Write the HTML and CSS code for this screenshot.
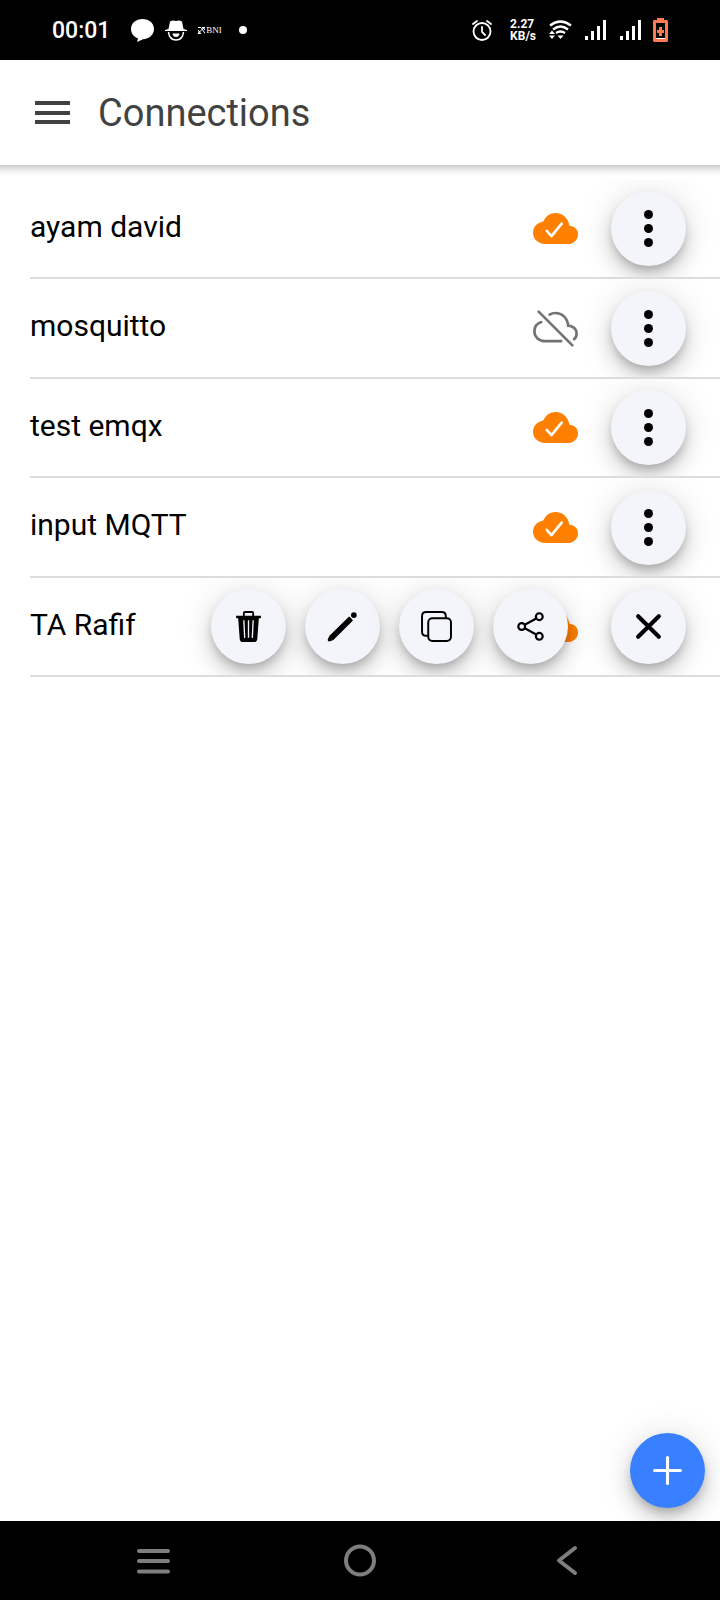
FILE: index.html
```html
<!DOCTYPE html>
<html lang="en">
<head>
<meta charset="utf-8">
<meta name="viewport" content="width=device-width, initial-scale=1">
<title>Connections</title>
<link rel="stylesheet" href="styles.css">
</head>
<body>
<svg class="defs" aria-hidden="true">
  <symbol id="cloud-done" viewBox="0 0 512 512">
    <path fill="#ff8000" d="M396 432H136c-36.400 0-70.400-12.600-95.500-35.400C14.400 372.900 0 340 0 304c0-36.600 13.400-68.100 38.700-91.200 18.100-16.500 42.200-28.300 69.200-33.900a16 16 0 0 0 11.400-9.200 156 156 0 0 1 42-57C187.800 91.700 220.500 80 256 80a153.600 153.600 0 0 1 107.100 42.900c24.700 23.800 41.500 55.300 49.200 92a16 16 0 0 0 12.900 12.400c23.500 4 44.300 13.400 60.400 27.300C505.200 271.300 512 294.400 512 328c0 28.300-12.700 55.100-35.700 74.500C454.600 420.900 426.100 432 396 432z"/>
    <path fill="none" stroke="#fff" stroke-width="30" stroke-linecap="round" stroke-linejoin="round" d="M156 284l54 58 116-142"/>
  </symbol>
  <symbol id="cloud-off" viewBox="0 0 512 512">
    <g fill="none" stroke="#737373" stroke-width="30" stroke-linecap="round">
      <path d="M93.700 183.200C49.500 198 16 233.100 16 288c0 66 54 112 120 112h184.400"/>
      <path d="M467.800 377.200C485.200 363.300 496 341.600 496 312c0-59.800-53-85.800-96-88-8.900-89.500-71-144-144-144-26.200 0-48.800 6.900-67.600 18.100"/>
      <path d="M448 448L64 64"/>
    </g>
  </symbol>
  <symbol id="dots" viewBox="0 0 39 39">
    <circle cx="19.500" cy="5.500" r="4.500"/><circle cx="19.500" cy="19.500" r="4.500"/><circle cx="19.500" cy="33.500" r="4.500"/>
  </symbol>
  <symbol id="signal" viewBox="0 0 22 20">
    <path fill="#fff" d="M0 16h3v4H0zM6 11h3v9H6zM12 6h3v14h-3zM18 0h3v20h-3z"/>
  </symbol>
</svg>
<div class="screen">
  <div class="status">
    <div class="status-left">
      <time class="clock">00:01</time>
      <svg width="23" height="23" viewBox="0 0 23 23"><path fill="#fff" d="M11.500 0C18 0 23 4.300 23 10s-5 10-11 10.300L6 23l1-3.500C3 18 0 14.500 0 10 0 4.300 5 0 11.500 0z"/></svg>
      <svg width="22" height="21" viewBox="0 0 22 21"><path fill="#fff" d="M5 1.500Q8 0 11 1q3-1 6 .5L18.500 9 22 10v1H0v-1l3.500-1z"/><path fill="none" stroke="#fff" stroke-width="1.500" d="M3.500 12C4 17 7 20 11 20s7-3 7.500-8"/><path fill="#fff" d="M7.500 13.500h7Q14 17 11 17t-3.500-3.500z"/></svg>
      <span class="bank"><svg width="7" height="7" viewBox="0 0 7 7"><path stroke="#fff" fill="none" d="M0 .5h3l4 6M0 6.500l6-6M0 3l3 4M4 0l3 3M5 .5h2v2M0 4v2.500h2"/></svg>BNI</span>
      <i class="dot"></i>
    </div>
    <div class="status-right">
      <svg width="20" height="21" viewBox="0 0 20 21"><g fill="none" stroke="#fff" stroke-width="1.800" stroke-linecap="round"><circle cx="10" cy="11.500" r="8.500"/><path d="M1 4l4-3M19 4l-4-3M10 7v5l3 3"/></g></svg>
      <div class="speed"><span>2.27</span><span>KB/s</span></div>
      <svg width="23" height="20" viewBox="0 0 23 20"><g fill="none" stroke="#fff" stroke-width="2.400"><path d="M1 5.500q10.500-8 21 0M4 9.500q7.500-6 15 0M7 13q4.500-3 9 0"/></g><path fill="#fff" d="M0 14l3-3.500L6 14zM0 15.500h6L3 19zM8.500 15.500h6l-3 3.500z"/></svg>
      <svg width="22" height="20"><use href="#signal"/></svg>
      <svg class="sim" width="22" height="20"><use href="#signal"/></svg>
      <svg width="15" height="24" viewBox="0 0 15 24"><path fill="#ff7a50" d="M4 0h7v2h3l1 1v20l-1 1H1l-1-1V3l1-1h3z"/><path d="M3 5h9v16H3z"/><path fill="#ff7a50" d="M6 9h3v3h2v3H9v3H6v-3H4v-3h2z"/><path fill="#fff" d="M3 20h9v1H3z"/></svg>
    </div>
  </div>

  <header class="bar">
    <button class="plain" aria-label="Menu"><svg width="35" height="24" viewBox="0 0 35 24"><path fill="#424242" d="M0 0h35v4H0zM0 10h35v4H0zM0 19h35v4H0z"/></svg></button>
    <h1>Connections</h1>
  </header>

  <main class="content">
    <ul class="list">
      <li class="row"><span class="name">ayam david</span><svg class="cloud" role="img" aria-label="Connected"><use href="#cloud-done"/></svg><button class="fab" aria-label="Options"><svg width="39" height="39"><use href="#dots"/></svg></button></li>
      <li class="row"><span class="name">mosquitto</span><svg class="cloud" role="img" aria-label="Offline"><use href="#cloud-off"/></svg><button class="fab" aria-label="Options"><svg width="39" height="39"><use href="#dots"/></svg></button></li>
      <li class="row"><span class="name">test emqx</span><svg class="cloud" role="img" aria-label="Connected"><use href="#cloud-done"/></svg><button class="fab" aria-label="Options"><svg width="39" height="39"><use href="#dots"/></svg></button></li>
      <li class="row"><span class="name">input MQTT</span><svg class="cloud" role="img" aria-label="Connected"><use href="#cloud-done"/></svg><button class="fab" aria-label="Options"><svg width="39" height="39"><use href="#dots"/></svg></button></li>
      <li class="row"><span class="name">TA Rafif</span><svg class="cloud" role="img" aria-label="Connected"><use href="#cloud-done"/></svg>
        <div class="actions">
          <button class="fab" aria-label="Delete"><svg width="31" height="31" viewBox="0 0 30 30"><path fill="none" stroke="#000" stroke-width="1.800" d="M10.500 5V2q0-1 1-1h7q1 0 1 1v3"/><path d="M3 4.500h24V7H3zM5 7h20l-1.500 20q-.3 3-3 3h-11q-2.700 0-3-3z"/><path stroke="#f4f5fa" stroke-width="1.300" d="M10.500 9l.8 17M15 9v17M19.500 9l-.8 17"/></svg></button>
          <button class="fab" aria-label="Edit"><svg width="31" height="31" viewBox="0 0 30 30"><path d="M21.500 6l3 3L6 27.500 2 29q-1-.3-.8-1.500L3 24z" stroke="#000" stroke-linejoin="round"/><circle cx="26" cy="4" r="2.700"/></svg></button>
          <button class="fab" aria-label="Duplicate"><svg width="31" height="31" viewBox="0 0 30 30"><g fill="none" stroke="#000" stroke-width="1.900"><rect x="7" y="7" width="22" height="22" rx="4"/><path d="M24 6.500V5q0-4-4-4H5Q1 1 1 5v15q0 4 4 4h1.500"/></g></svg></button>
          <button class="fab" aria-label="Share"><svg width="31" height="31" viewBox="0 0 30 30"><g fill="none" stroke="#000" stroke-width="2.100"><circle cx="6.500" cy="15" r="3.300"/><circle cx="23.500" cy="5.500" r="3.300"/><circle cx="23.500" cy="24.500" r="3.300"/><path d="M9.500 13.300l11-6M9.500 16.700l11 6"/></g></svg></button>
        </div>
        <button class="fab" aria-label="Close"><svg width="31" height="31" viewBox="0 0 30 30"><path stroke="#000" stroke-width="4" stroke-linecap="round" d="M5 5l20 20M25 5L5 25"/></svg></button></li>
    </ul>
    <button class="fab add" aria-label="Add connection"><svg width="31" height="31" viewBox="0 0 30 30"><path stroke="#fff" stroke-width="3" stroke-linecap="round" d="M15 2.500v25M2.500 15h25"/></svg></button>
  </main>

  <nav class="nav">
    <button class="plain" aria-label="Recent apps"><svg width="34" height="34" viewBox="0 0 34 34"><path stroke="#7e7e7e" stroke-width="4" stroke-linecap="round" d="M3 7h29M3 17h29M3 27.500h29"/></svg></button>
    <button class="plain" aria-label="Home"><svg width="34" height="34" viewBox="0 0 34 34"><circle cx="17" cy="16.500" r="14" fill="none" stroke="#7e7e7e" stroke-width="4"/></svg></button>
    <button class="plain" aria-label="Back"><svg width="34" height="34" viewBox="0 0 34 34"><path fill="none" stroke="#7e7e7e" stroke-width="4" stroke-linecap="round" stroke-linejoin="round" d="M25 4L9 16.500 25 29"/></svg></button>
  </nav>
</div>
</body>
</html>
```
FILE: styles.css
```css
* { box-sizing: border-box; }
body { margin: 0; background: #fff; color: #000; font-family: Roboto, sans-serif; }
svg { display: block; flex: none; }
button { border: 0; padding: 0; cursor: pointer; }
.defs { position: absolute; width: 0; height: 0; }
.screen { min-height: 100vh; display: flex; flex-direction: column; }

.status { height: 60px; padding: 0 52px; background: #000; color: #fff; display: flex; justify-content: space-between; align-items: center; }
.status-left, .status-right { display: flex; align-items: center; }
.status-left { gap: 11px; }
.clock { font-size: 23px; font-weight: 500; line-height: 28px; margin: 2px 10px 0 0; }
.bank { display: flex; align-items: center; gap: 1px; font: 9px/10px "Liberation Serif", serif; }
.dot { width: 8px; height: 8px; margin-left: 6px; border-radius: 50%; background: #fff; }
.status-right { gap: 13px; }
.speed { display: flex; flex-direction: column; font-size: 12px; line-height: 12px; font-weight: 700; margin-left: 5px; }
.sim { margin-right: -2px; }

.bar { position: relative; height: 105px; padding: 0 35px; display: flex; align-items: center; gap: 28px; background: #fff; }
.bar::after { content: ""; position: absolute; left: 0; right: 0; top: 100%; height: 10px; background: linear-gradient(rgba(0, 0, 0, .2), rgba(0, 0, 0, .08) 50%, transparent); }
.bar h1 { margin: 0; font-size: 38px; line-height: 44px; font-weight: 400; color: #424242; }
.plain { background: none; }

.content { position: relative; flex: 1; padding-top: 15px; }
.list { list-style: none; margin: 0; padding: 0; }
.row { position: relative; height: 99px; padding: 0 34px 2px 30px; display: flex; align-items: center; overflow: hidden; }
.row:nth-child(even) { height: 100px; }
.row::after { content: ""; position: absolute; left: 30px; right: 0; bottom: 0; height: 2px; background: #dcdcdc; }
.name { flex: 1; padding-bottom: 4px; font-size: 30px; line-height: 36px; }
.cloud { width: 45px; height: 45px; margin-right: 33px; }
.fab { flex: none; width: 75px; height: 75px; border-radius: 50%; background: #f4f5fa; display: flex; align-items: center; justify-content: center; box-shadow: 0 6px 10px -2px rgba(0, 0, 0, .2), 0 12px 20px rgba(0, 0, 0, .14), 0 2px 36px rgba(0, 0, 0, .12); }
.actions { position: absolute; right: 152px; top: 11px; display: flex; gap: 19px; }
.add { position: absolute; right: 15px; bottom: 13px; background: #3880ff; }

.nav { position: relative; height: 79px; padding: 0 136px; background: #000; display: flex; align-items: center; justify-content: space-between; }
```
